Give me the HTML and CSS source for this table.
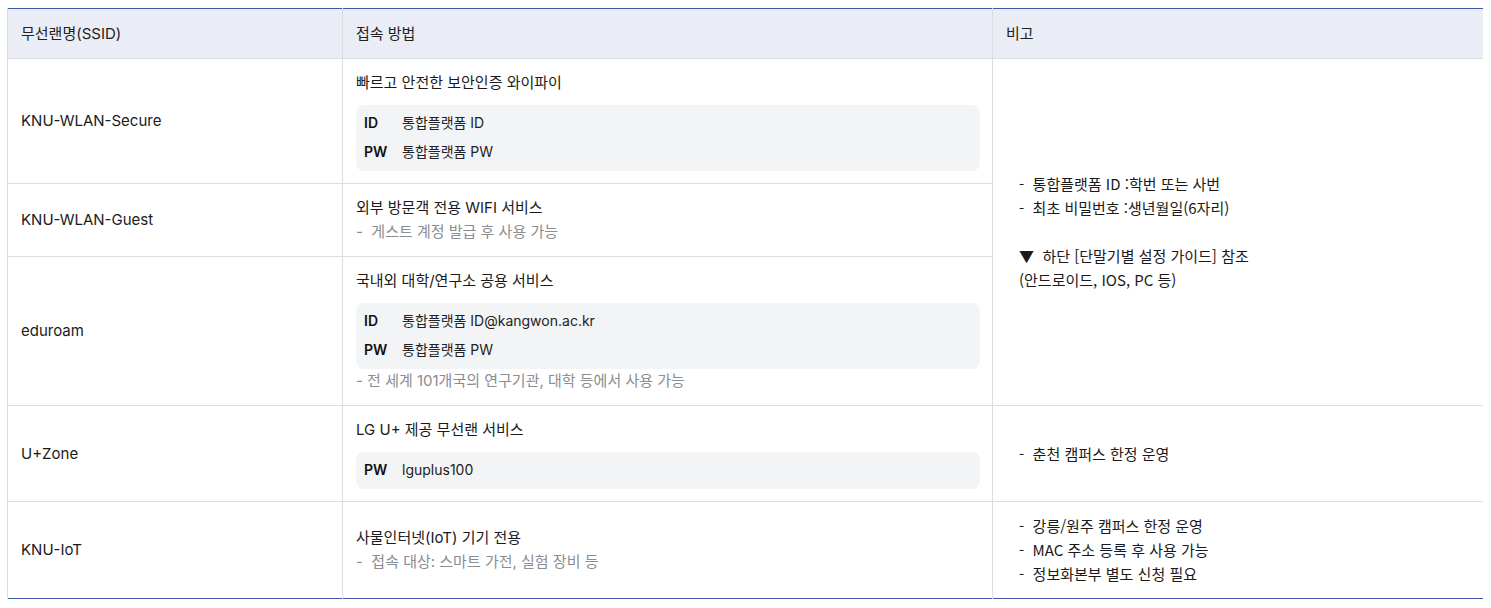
FILE: index.html
```html
<!DOCTYPE html>
<html lang="ko">
<head>
<meta charset="utf-8">
<link rel="stylesheet" href="styles.css">
</head>
<body>
<table class="wifi">
  <colgroup>
    <col class="c1"><col class="c2"><col class="c3">
  </colgroup>
  <thead>
    <tr><th>무선랜명(SSID)</th><th>접속 방법</th><th>비고</th></tr>
  </thead>
  <tbody>
    <tr class="r1">
      <td>KNU-WLAN-Secure</td>
      <td>
        <p class="title">빠르고 안전한 보안인증 와이파이</p>
        <div class="cred">
          <div class="line"><b>ID</b><span>통합플랫폼 ID</span></div>
          <div class="line"><b>PW</b><span>통합플랫폼 PW</span></div>
        </div>
      </td>
      <td rowspan="3" class="note">
        <p>- &nbsp;통합플랫폼 ID :학번 또는 사번</p>
        <p>- &nbsp;최초 비밀번호 :생년월일(6자리)</p>
        <p>&nbsp;</p>
        <p>▼ &nbsp;하단 [단말기별 설정 가이드] 참조</p>
        <p>(안드로이드, IOS, PC 등)</p>
      </td>
    </tr>
    <tr class="r2">
      <td>KNU-WLAN-Guest</td>
      <td>
        <p class="title">외부 방문객 전용 WIFI 서비스</p>
        <p class="sub">- &nbsp;게스트 계정 발급 후 사용 가능</p>
      </td>
    </tr>
    <tr class="r3">
      <td>eduroam</td>
      <td>
        <p class="title">국내외 대학/연구소 공용 서비스</p>
        <div class="cred">
          <div class="line"><b>ID</b><span>통합플랫폼 ID@kangwon.ac.kr</span></div>
          <div class="line"><b>PW</b><span>통합플랫폼 PW</span></div>
        </div>
        <p class="sub tight">- 전 세계 101개국의 연구기관, 대학 등에서 사용 가능</p>
      </td>
    </tr>
    <tr class="r4">
      <td>U+Zone</td>
      <td>
        <p class="title">LG U+ 제공 무선랜 서비스</p>
        <div class="cred">
          <div class="line"><b>PW</b><span>lguplus100</span></div>
        </div>
      </td>
      <td class="note"><p>- &nbsp;춘천 캠퍼스 한정 운영</p></td>
    </tr>
    <tr class="r5">
      <td>KNU-IoT</td>
      <td>
        <p class="title">사물인터넷(IoT) 기기 전용</p>
        <p class="sub">- &nbsp;접속 대상: 스마트 가전, 실험 장비 등</p>
      </td>
      <td class="note">
        <p>- &nbsp;강릉/원주 캠퍼스 한정 운영</p>
        <p>- &nbsp;MAC 주소 등록 후 사용 가능</p>
        <p>- &nbsp;정보화본부 별도 신청 필요</p>
      </td>
    </tr>
  </tbody>
</table>
</body>
</html>
```

FILE: styles.css
```css
html, body {
  background: #ffffff;
}
body {
  margin: 8px 8px 0 7px;
  font-family: Inter, "Noto Sans CJK KR", "Noto Sans", sans-serif;
  font-size: 15px;
  color: #1a1a1a;
}
p {
  margin: 0;
}
.wifi {
  width: 1476px;
  border-collapse: collapse;
  table-layout: fixed;
  border-top: 1px solid #3c5aa8;
  border-bottom: 1px solid #3c5aa8;
}
.c1 { width: 335px; }
.c2 { width: 650px; }
.c3 { width: 491px; }
.wifi th {
  height: 49px;
  padding: 0 13px;
  text-align: left;
  font-weight: 400;
  background: #eaedf5;
  color: #222;
  border: 1px solid #dcdde0;
  border-top: none;
  line-height: 24px;
}
.wifi td {
  padding: 12px 12px 12px 13px;
  border: 1px solid #dcdde0;
  vertical-align: middle;
  line-height: 24px;
}
.wifi tbody tr:last-child td {
  border-bottom: none;
}
.r1 td { height: 100px; }
.r2 td { height: 48px; }
.r3 td { height: 124px; }
.r4 td { height: 71px; }
.r5 td { height: 72px; }
.title {
  color: #1a1a1a;
}
.sub {
  color: #8a8d92;
}
.cred {
  margin-top: 10px;
  background: #f3f4f6;
  border-radius: 8px;
  padding: 6px 8px 7px;
  display: flex;
  flex-direction: column;
  gap: 5px;
}
.line {
  display: flex;
  font-size: 14px;
}
.line b {
  width: 38px;
  font-weight: 600;
  color: #111;
}
.line span {
  color: #222;
}
.wifi td.note {
  padding-left: 26px;
  color: #1a1a1a;
  font-family: "Noto Sans CJK KR", "Noto Sans", sans-serif;
}
```
